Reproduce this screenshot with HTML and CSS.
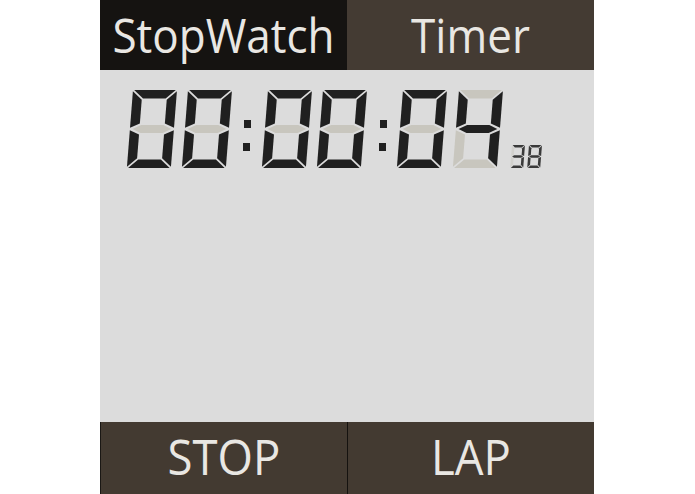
FILE: index.html
```html
<!DOCTYPE html>
<html>
<head>
<meta charset="utf-8">
<link rel="stylesheet" href="styles.css">
</head>
<body>
<div class="app">
  <div class="tabs">
    <div class="tab active"><span class="label">StopWatch</span></div>
    <div class="tab"><span class="label">Timer</span></div>
  </div>
  <div class="display">
    <svg class="clock" width="494" height="110" viewBox="0 0 494 110">
      <defs>
        <polygon id="a" points="1.2,0 42.8,0 33.3,8.5 10.7,8.5"/>
        <polygon id="b" points="44,1.2 44,37.8 34.5,33.6 34.5,9.7"/>
        <polygon id="c" points="44,40.2 44,76.8 34.5,68.3 34.5,44.4"/>
        <polygon id="d" points="10.7,69.5 33.3,69.5 42.8,78 1.2,78"/>
        <polygon id="e" points="0,40.2 9.5,44.4 9.5,68.3 0,76.8"/>
        <polygon id="f" points="0,1.2 9.5,9.7 9.5,33.6 0,37.8"/>
        <polygon id="g" points="2.6,39 10.9,34.9 33.1,34.9 41.4,39 33.1,43.1 10.9,43.1"/>

        <polygon id="sa" points="0.6,0 12.4,0 10,2.6 3,2.6"/>
        <polygon id="sb" points="13,0.6 13,11 10.4,9.9 10.4,3.2"/>
        <polygon id="sc" points="13,12 13,22.4 10.4,19.8 10.4,13.1"/>
        <polygon id="sd" points="3,20.4 10,20.4 12.4,23 0.6,23"/>
        <polygon id="se" points="0,12 2.6,13.1 2.6,19.8 0,22.4"/>
        <polygon id="sf" points="0,0.6 2.6,3.2 2.6,9.9 0,11"/>
        <polygon id="sg" points="1,11.5 3,10.2 10,10.2 12,11.5 10,12.8 3,12.8"/>
      </defs>

      <g transform="translate(33 20) skewX(-4.5)">
        <use href="#a" class="on"/><use href="#b" class="on"/><use href="#c" class="on"/><use href="#d" class="on"/><use href="#e" class="on"/><use href="#f" class="on"/><use href="#g" class="off"/>
      </g>
      <g transform="translate(88 20) skewX(-4.5)">
        <use href="#a" class="on"/><use href="#b" class="on"/><use href="#c" class="on"/><use href="#d" class="on"/><use href="#e" class="on"/><use href="#f" class="on"/><use href="#g" class="off"/>
      </g>
      <rect class="dot" x="144" y="50" width="7" height="8"/>
      <rect class="dot" x="143" y="73" width="7" height="8"/>
      <g transform="translate(168 20) skewX(-4.5)">
        <use href="#a" class="on"/><use href="#b" class="on"/><use href="#c" class="on"/><use href="#d" class="on"/><use href="#e" class="on"/><use href="#f" class="on"/><use href="#g" class="off"/>
      </g>
      <g transform="translate(223 20) skewX(-4.5)">
        <use href="#a" class="on"/><use href="#b" class="on"/><use href="#c" class="on"/><use href="#d" class="on"/><use href="#e" class="on"/><use href="#f" class="on"/><use href="#g" class="off"/>
      </g>
      <rect class="dot" x="280" y="50" width="7" height="8"/>
      <rect class="dot" x="279" y="73" width="7" height="8"/>
      <g transform="translate(303 20) skewX(-4.5)">
        <use href="#a" class="on"/><use href="#b" class="on"/><use href="#c" class="on"/><use href="#d" class="on"/><use href="#e" class="on"/><use href="#f" class="on"/><use href="#g" class="off"/>
      </g>
      <g transform="translate(359 20) skewX(-4.5)">
        <use href="#a" class="off"/><use href="#b" class="on"/><use href="#c" class="on"/><use href="#d" class="off"/><use href="#e" class="off"/><use href="#f" class="on"/><use href="#g" class="on"/>
      </g>

      <g transform="translate(412 75) skewX(-4.5)">
        <use href="#sa" class="son"/><use href="#sb" class="son"/><use href="#sc" class="son"/><use href="#sd" class="son"/><use href="#se" class="soff"/><use href="#sf" class="soff"/><use href="#sg" class="son"/>
      </g>
      <g transform="translate(429 75) skewX(-4.5)">
        <use href="#sa" class="son"/><use href="#sb" class="son"/><use href="#sc" class="son"/><use href="#sd" class="son"/><use href="#se" class="son"/><use href="#sf" class="son"/><use href="#sg" class="son"/>
      </g>
    </svg>
  </div>
  <div class="controls">
    <button class="btn"><span class="label">STOP</span></button>
    <button class="btn"><span class="label">LAP</span></button>
  </div>
</div>
</body>
</html>
```

FILE: styles.css
```css
html, body {
  margin: 0;
  padding: 0;
  background: #ffffff;
  font-family: "Open Sans", "Noto Sans", sans-serif;
}

.app {
  width: 494px;
  height: 494px;
  margin-left: 100px;
  display: flex;
  flex-direction: column;
}

.tabs {
  display: flex;
  height: 70px;
}

.tab {
  flex: 1 1 0;
  display: flex;
  align-items: center;
  justify-content: center;
  background: #443b33;
  color: #e9e7e3;
}

.tab.active {
  background: #151311;
}

.label {
  display: inline-block;
  font-size: 44px;
  line-height: 1;
  transform: scaleY(1.1);
  padding-bottom: 2px;
}

.display {
  flex: 1 1 auto;
  background: #dcdcdc;
}

.clock {
  display: block;
}

.on { fill: #202020; }
.off { fill: #c8c6be; }
.dot { fill: #202020; }
.son { fill: #3a3a3a; }
.soff { fill: #d2d1cd; }

.controls {
  display: flex;
  height: 72px;
  background: #433a31;
  border-left: 1px solid #1a1714;
}

.btn {
  flex: 1 1 0;
  margin: 0;
  padding: 0;
  border: 0;
  background: #433a31;
  color: #e9e7e3;
  font-family: "Open Sans", "Noto Sans", sans-serif;
  display: flex;
  align-items: center;
  justify-content: center;
}

.btn .label {
  font-size: 45.5px;
  transform: scaleY(1.07);
}

.btn + .btn {
  border-left: 1px solid #15120f;
}
```
